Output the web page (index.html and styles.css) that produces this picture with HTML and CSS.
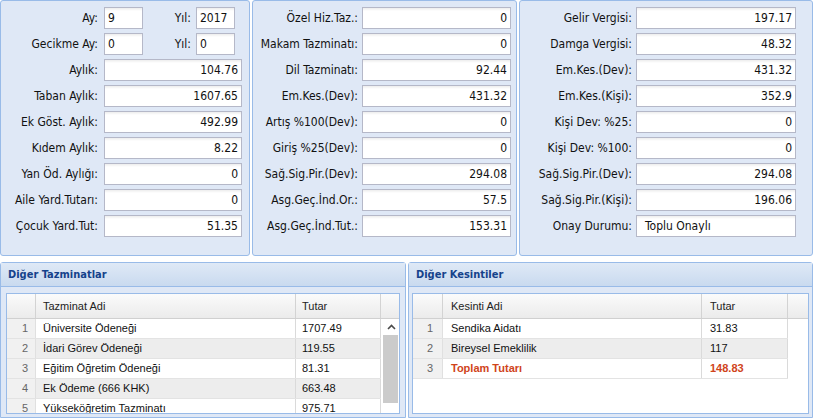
FILE: index.html
```html
<!DOCTYPE html>
<html lang="tr">
<head>
<meta charset="utf-8">
<title>Maaş Detayı</title>
<link rel="stylesheet" href="styles.css">
</head>
<body>
<div class="top">
  <div class="fs p1">
    <div class="row">
      <span class="lab">Ay:</span><span class="fld short">9</span>
      <span class="lab yil">Yıl:</span><span class="fld short">2017</span>
    </div>
    <div class="row">
      <span class="lab">Gecikme Ay:</span><span class="fld short">0</span>
      <span class="lab yil">Yıl:</span><span class="fld short">0</span>
    </div>
    <div class="row"><span class="lab">Aylık:</span><span class="fld num">104.76</span></div>
    <div class="row"><span class="lab">Taban Aylık:</span><span class="fld num">1607.65</span></div>
    <div class="row"><span class="lab">Ek Göst. Aylık:</span><span class="fld num">492.99</span></div>
    <div class="row"><span class="lab">Kıdem Aylık:</span><span class="fld num">8.22</span></div>
    <div class="row"><span class="lab">Yan Öd. Aylığı:</span><span class="fld num">0</span></div>
    <div class="row"><span class="lab">Aile Yard.Tutarı:</span><span class="fld num">0</span></div>
    <div class="row"><span class="lab">Çocuk Yard.Tut:</span><span class="fld num">51.35</span></div>
  </div>
  <div class="fs p2">
    <div class="row"><span class="lab">Özel Hiz.Taz.:</span><span class="fld num">0</span></div>
    <div class="row"><span class="lab">Makam Tazminatı:</span><span class="fld num">0</span></div>
    <div class="row"><span class="lab">Dil Tazminatı:</span><span class="fld num">92.44</span></div>
    <div class="row"><span class="lab">Em.Kes.(Dev):</span><span class="fld num">431.32</span></div>
    <div class="row"><span class="lab">Artış %100(Dev):</span><span class="fld num">0</span></div>
    <div class="row"><span class="lab">Giriş %25(Dev):</span><span class="fld num">0</span></div>
    <div class="row"><span class="lab">Sağ.Sig.Pir.(Dev):</span><span class="fld num">294.08</span></div>
    <div class="row"><span class="lab">Asg.Geç.İnd.Or.:</span><span class="fld num">57.5</span></div>
    <div class="row"><span class="lab">Asg.Geç.İnd.Tut.:</span><span class="fld num">153.31</span></div>
  </div>
  <div class="fs p3">
    <div class="row"><span class="lab">Gelir Vergisi:</span><span class="fld num">197.17</span></div>
    <div class="row"><span class="lab">Damga Vergisi:</span><span class="fld num">48.32</span></div>
    <div class="row"><span class="lab">Em.Kes.(Dev):</span><span class="fld num">431.32</span></div>
    <div class="row"><span class="lab">Em.Kes.(Kişi):</span><span class="fld num">352.9</span></div>
    <div class="row"><span class="lab">Kişi Dev: %25:</span><span class="fld num">0</span></div>
    <div class="row"><span class="lab">Kişi Dev: %100:</span><span class="fld num">0</span></div>
    <div class="row"><span class="lab">Sağ.Sig.Pir.(Dev):</span><span class="fld num">294.08</span></div>
    <div class="row"><span class="lab">Sağ.Sig.Pir.(Kişi):</span><span class="fld num">196.06</span></div>
    <div class="row"><span class="lab">Onay Durumu:</span><span class="fld status">Toplu Onaylı</span></div>
  </div>
</div>

<div class="bottom">
  <div class="panel pl">
    <div class="phead">Diğer Tazminatlar</div>
    <div class="pbody">
      <div class="grid">
        <div class="ghead">
          <div class="hc c-rn"></div>
          <div class="hc c-name">Tazminat Adi</div>
          <div class="hc c-amt">Tutar</div>
          <div class="hc c-sp"></div>
        </div>
        <div class="gbody">
          <div class="rows">
            <div class="grow"><div class="c-rn">1</div><div class="c-name">Üniversite Ödeneği</div><div class="c-amt">1707.49</div></div>
            <div class="grow alt"><div class="c-rn">2</div><div class="c-name">İdari Görev Ödeneği</div><div class="c-amt">119.55</div></div>
            <div class="grow"><div class="c-rn">3</div><div class="c-name">Eğitim Öğretim Ödeneği</div><div class="c-amt">81.31</div></div>
            <div class="grow alt"><div class="c-rn">4</div><div class="c-name">Ek Ödeme (666 KHK)</div><div class="c-amt">663.48</div></div>
            <div class="grow"><div class="c-rn">5</div><div class="c-name">Yükseköğretim Tazminatı</div><div class="c-amt">975.71</div></div>
          </div>
          <div class="vscroll">
            <div class="sbtn">
              <svg width="9" height="6" viewBox="0 0 9 6"><polyline points="1,5 4.5,1.5 8,5" fill="none" stroke="#4a4a4a" stroke-width="1.6"/></svg>
            </div>
            <div class="thumb"></div>
          </div>
        </div>
      </div>
    </div>
  </div>
  <div class="panel pr">
    <div class="phead">Diğer Kesintiler</div>
    <div class="pbody">
      <div class="grid">
        <div class="ghead">
          <div class="hc c-rn"></div>
          <div class="hc c-name">Kesinti Adi</div>
          <div class="hc c-amt">Tutar</div>
          <div class="hc c-sp"></div>
        </div>
        <div class="gbody">
          <div class="rows">
            <div class="grow"><div class="c-rn">1</div><div class="c-name">Sendika Aidatı</div><div class="c-amt">31.83</div></div>
            <div class="grow alt"><div class="c-rn">2</div><div class="c-name">Bireysel Emeklilik</div><div class="c-amt">117</div></div>
            <div class="grow total"><div class="c-rn">3</div><div class="c-name">Toplam Tutarı</div><div class="c-amt">148.83</div></div>
          </div>
        </div>
      </div>
    </div>
  </div>
</div>
</body>
</html>
```

FILE: styles.css
```css
* { box-sizing: border-box; }

html, body {
  margin: 0;
  padding: 0;
  background: #ffffff;
}

body {
  width: 815px;
  height: 420px;
  overflow: hidden;
  font-family: "DejaVu Sans Condensed", "DejaVu Sans", sans-serif;
  font-stretch: semi-condensed;
  font-size: 12px;
  color: #111;
}

/* ---------- top field sets ---------- */
.top {
  display: flex;
  gap: 2px;
  height: 256px;
}

.fs {
  background: #dfe8f6;
  border: 1px solid #99bbe8;
  border-radius: 3px;
  padding-top: 6px;
  display: flex;
  flex-direction: column;
  gap: 4px;
}

.p1 { width: 250px; --lw: 97px; --gap: 6px; --iw: 138px; }
.p2 { width: 265px; --lw: 105px; --gap: 4px; --iw: 149px; }
.p3 { width: 294px; --lw: 112px; --gap: 4px; --iw: 160px; }

.row {
  display: flex;
  align-items: center;
  height: 22px;
}

.lab {
  flex: none;
  width: var(--lw);
  margin-right: var(--gap);
  text-align: right;
  white-space: nowrap;
}

.fld {
  flex: none;
  width: var(--iw);
  height: 22px;
  line-height: 20px;
  padding: 0 3px;
  border: 1px solid #b5b8c8;
  background: linear-gradient(#ededed, #ffffff 3px);
  white-space: nowrap;
  overflow: hidden;
}

.num { text-align: right; }
.status { padding-left: 8px; }

.p1 .short { width: 39px; }
.p1 .yil { width: 48px; margin-right: 5px; }

/* ---------- bottom panels ---------- */
.bottom {
  display: flex;
  gap: 2px;
  margin-top: 6px;
}

.panel {
  height: 156px;
  border: 1px solid #99bbe8;
  border-radius: 3px 3px 0 0;
  background: #dfe8f6;
  display: flex;
  flex-direction: column;
}

.pl { width: 406px; }
.pr { width: 405px; }

.phead {
  flex: none;
  height: 24px;
  line-height: 23px;
  border-bottom: 1px solid #99bbe8;
  background: linear-gradient(#dfe9f6, #c9daef);
  color: #15428b;
  font-weight: bold;
  font-size: 11px;
  padding-left: 7px;
}

.pbody {
  flex: 1;
  padding: 6px 5px 3px 5px;
}

.pr .pbody { padding: 6px 3px 3px 3px; }

.grid {
  height: 121px;
  border: 1px solid #99bbe8;
  background: #ffffff;
  overflow: hidden;
  font-family: "Liberation Sans", Arial, sans-serif;
  font-stretch: normal;
  font-size: 11px;
  color: #111;
}

.pl .grid { --rn: 29px; --name: 260px; --amt: 85px; --sp: 18px; --pad: 7px; --apad: 6px; --rnpad: 7px; }
.pr .grid { --rn: 30px; --name: 259px; --amt: 86px; --sp: 20px; --pad: 8px; --apad: 8px; --rnpad: 9px; }

.ghead {
  display: flex;
  height: 25px;
  border-bottom: 1px solid #d0d0d0;
  background: linear-gradient(#fbfbfb, #ebebeb);
  color: #222;
}

.hc {
  line-height: 24px;
  border-right: 1px solid #d3d3d3;
}

.c-rn { flex: none; width: var(--rn); text-align: right; padding-right: var(--rnpad); }
.c-name { flex: none; width: var(--name); padding-left: var(--pad); white-space: nowrap; overflow: hidden; }
.c-amt { flex: none; width: var(--amt); padding-left: var(--apad); }
.c-sp { flex: none; width: var(--sp); border-right: 0; }

.gbody {
  display: flex;
  align-items: flex-start;
}

.rows {
  flex: none;
}

.grow {
  display: flex;
  height: 20px;
  line-height: 19px;
  border-bottom: 1px solid #e3e3e3;
  background: #ffffff;
}

.grow > div {
  border-right: 1px solid #dadada;
}

.grow .c-rn {
  background: #f1f1f1;
  color: #666;
  border-right-color: #e0e0e0;
}

.grow.alt { background: #ededed; }

.grow.total {
  color: #d0441b;
  font-weight: bold;
}

.grow.total .c-rn {
  color: #666;
  font-weight: normal;
}

.vscroll {
  flex: none;
  width: 18px;
  height: 120px;
  background: #ffffff;
}

.sbtn {
  height: 16px;
  display: flex;
  align-items: center;
  justify-content: center;
  padding-left: 3px;
}

.thumb {
  margin-left: 2px;
  width: 15px;
  height: 68px;
  background: #cbcbcb;
}
```
